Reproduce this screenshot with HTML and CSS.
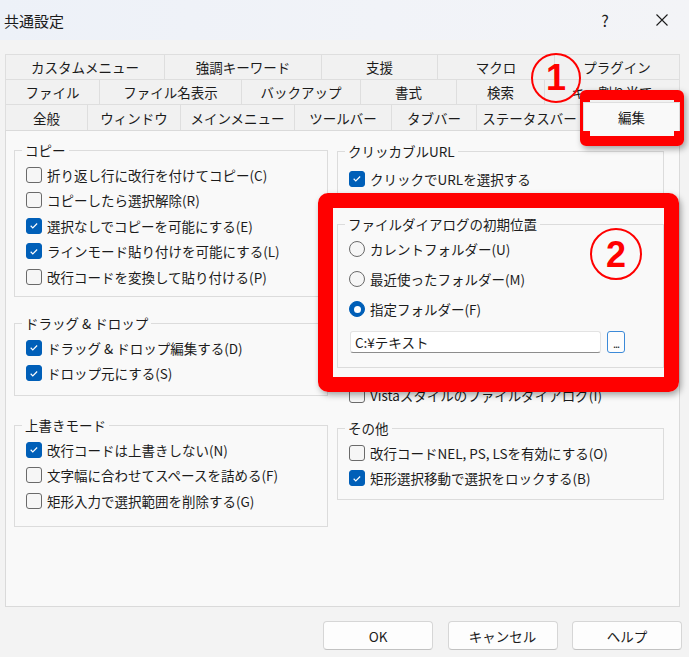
FILE: index.html
```html
<!DOCTYPE html>
<html lang="ja">
<head>
<meta charset="utf-8">
<title>共通設定</title>
<link rel="stylesheet" href="styles.css">
</head>
<body>
<div class="dialog">
  <div class="titlebar">
    <span class="title">共通設定</span>
    <span class="help">?</span>
    <span class="close"><svg viewBox="0 0 14 14" width="14" height="14"><path d="M1.5 1.5L12.5 12.5M12.5 1.5L1.5 12.5" stroke="#1b1b1b" stroke-width="1.1" fill="none"/></svg></span>
  </div>

  <div class="tabs">
    <div class="tabrow row1">
      <div class="tab">カスタムメニュー</div>
      <div class="tab">強調キーワード</div>
      <div class="tab">支援</div>
      <div class="tab">マクロ</div>
      <div class="tab">プラグイン</div>
    </div>
    <div class="tabrow row2">
      <div class="tab">ファイル</div>
      <div class="tab">ファイル名表示</div>
      <div class="tab">バックアップ</div>
      <div class="tab">書式</div>
      <div class="tab">検索</div>
      <div class="tab">キー割り当て</div>
    </div>
    <div class="tabrow row3">
      <div class="tab">全般</div>
      <div class="tab">ウィンドウ</div>
      <div class="tab">メインメニュー</div>
      <div class="tab">ツールバー</div>
      <div class="tab">タブバー</div>
      <div class="tab">ステータスバー</div>
      <div class="tab active">編集</div>
    </div>
  </div>

  <div class="panel">
    <div class="col col-left">
      <fieldset class="group g-copy">
        <legend>コピー</legend>
        <div class="item"><span class="cb"></span>折り返し行に改行を付けてコピー(C)</div>
        <div class="item"><span class="cb"></span>コピーしたら選択解除(R)</div>
        <div class="item"><span class="cb on"><svg viewBox="0 0 16 16"><path d="M4.2 8.3l2.4 2.4 5-5" stroke="#fff" stroke-width="1.3" fill="none"/></svg></span>選択なしでコピーを可能にする(E)</div>
        <div class="item"><span class="cb on"><svg viewBox="0 0 16 16"><path d="M4.2 8.3l2.4 2.4 5-5" stroke="#fff" stroke-width="1.3" fill="none"/></svg></span>ラインモード貼り付けを可能にする(L)</div>
        <div class="item"><span class="cb"></span>改行コードを変換して貼り付ける(P)</div>
      </fieldset>

      <fieldset class="group g-drag">
        <legend>ドラッグ &amp; ドロップ</legend>
        <div class="item"><span class="cb on"><svg viewBox="0 0 16 16"><path d="M4.2 8.3l2.4 2.4 5-5" stroke="#fff" stroke-width="1.3" fill="none"/></svg></span>ドラッグ &amp; ドロップ編集する(D)</div>
        <div class="item"><span class="cb on"><svg viewBox="0 0 16 16"><path d="M4.2 8.3l2.4 2.4 5-5" stroke="#fff" stroke-width="1.3" fill="none"/></svg></span>ドロップ元にする(S)</div>
      </fieldset>

      <fieldset class="group g-over">
        <legend>上書きモード</legend>
        <div class="item"><span class="cb on"><svg viewBox="0 0 16 16"><path d="M4.2 8.3l2.4 2.4 5-5" stroke="#fff" stroke-width="1.3" fill="none"/></svg></span>改行コードは上書きしない(N)</div>
        <div class="item"><span class="cb"></span>文字幅に合わせてスペースを詰める(F)</div>
        <div class="item"><span class="cb"></span>矩形入力で選択範囲を削除する(G)</div>
      </fieldset>
    </div>

    <div class="col col-right">
      <fieldset class="group g-url">
        <legend>クリッカブルURL</legend>
        <div class="item"><span class="cb on"><svg viewBox="0 0 16 16"><path d="M4.2 8.3l2.4 2.4 5-5" stroke="#fff" stroke-width="1.3" fill="none"/></svg></span>クリックでURLを選択する</div>
      </fieldset>

      <fieldset class="group g-dlg">
        <legend>ファイルダイアログの初期位置</legend>
        <div class="item tall"><span class="rb"></span>カレントフォルダー(U)</div>
        <div class="item tall"><span class="rb"></span>最近使ったフォルダー(M)</div>
        <div class="item tall"><span class="rb on"></span>指定フォルダー(F)</div>
        <div class="pathrow">
          <div class="pathbox">C:¥テキスト</div>
          <div class="browse">...</div>
        </div>
      </fieldset>

      <div class="item loose"><span class="cb"></span>Vistaスタイルのファイルダイアログ(I)</div>

      <fieldset class="group g-etc">
        <legend>その他</legend>
        <div class="item"><span class="cb"></span>改行コードNEL, PS, LSを有効にする(O)</div>
        <div class="item"><span class="cb on"><svg viewBox="0 0 16 16"><path d="M4.2 8.3l2.4 2.4 5-5" stroke="#fff" stroke-width="1.3" fill="none"/></svg></span>矩形選択移動で選択をロックする(B)</div>
      </fieldset>
    </div>
  </div>

  <div class="buttons">
    <div class="btn">OK</div>
    <div class="btn">キャンセル</div>
    <div class="btn">ヘルプ</div>
  </div>

  <div class="mark box1"></div>
  <div class="mark box2"></div>
  <svg class="num num1" viewBox="0 0 52 52" width="52" height="52">
    <circle cx="26" cy="26" r="24" stroke="#f00" stroke-width="2" fill="none"/>
    <text x="26" y="38" text-anchor="middle" class="numtext">1</text>
  </svg>
  <svg class="num num2" viewBox="0 0 54 54" width="54" height="54">
    <circle cx="27" cy="27" r="25" stroke="#f00" stroke-width="2" fill="none"/>
    <text x="27" y="39.5" text-anchor="middle" class="numtext">2</text>
  </svg>
</div>
</body>
</html>
```

FILE: styles.css
```css
* { box-sizing: border-box; }
html, body { margin: 0; padding: 0; }
body {
  width: 689px;
  height: 657px;
  overflow: hidden;
  background: #f3f3f3;
  font-family: "Noto Sans CJK JP", "Noto Sans", sans-serif;
  font-size: 13.5px;
  color: #1b1b1b;
}
.dialog { position: relative; width: 689px; height: 657px; }

/* title bar */
.titlebar {
  height: 40px;
  display: flex;
  align-items: center;
  padding-left: 4px;
  background: linear-gradient(90deg, #edf1f8 0%, #f1f3f8 55%, #f3f4f7 100%);
}
.title { flex: 1; font-size: 15px; }
.help { width: 16px; text-align: center; font-size: 16px; margin-right: 42px; }
.close { width: 14px; height: 14px; margin-right: 20px; display: flex; }

/* tabs */
.tabs { padding: 14px 0 0 5px; }
.tabrow { display: grid; height: 25px; }
.row1 { grid-template-columns: 160px 157px 116px 117px 125px; }
.row2 { grid-template-columns: 95px 142px 119px 96px 88px 135px; }
.row3 { grid-template-columns: 83px 93px 114px 97px 85px 106px 97px; height: 26px; }
.tab {
  display: flex;
  align-items: center;
  justify-content: center;
  white-space: nowrap;
  background: #f1f1f1;
  border-top: 1px solid #dedede;
  border-right: 1px solid #dedede;
}
.tab:first-child { border-left: 1px solid #dedede; }
.tab.active {
  position: relative;
  z-index: 1;
  background: #f9f9f9;
  margin-top: -2px;
  margin-bottom: -1px;
  border-left: 1px solid #dedede;
}

/* panel */
.panel {
  margin-left: 5px;
  width: 675px;
  height: 477px;
  border: 1px solid #dadada;
  background: #f9f9f9;
  display: flex;
  gap: 9px;
  padding: 11px 0 0 8px;
}
.col { display: flex; flex-direction: column; }
.col-left { width: 314px; }
.col-right { width: 327px; }

fieldset.group {
  margin: 0;
  padding: 4px 0 0 0;
  border: 1px solid #dcdcdc;
  min-width: 0;
}
fieldset.group legend {
  margin-left: 7px;
  padding: 0 3px;
  line-height: 16px;
}
.g-copy { height: 155px; }
.g-drag { height: 81px; margin-top: 18px !important; }
.g-over { height: 110px; margin-top: 21px !important; }
.g-url { height: 55px; margin-top: 1px !important; padding-top: 7px !important; }
.g-dlg { height: 152px; margin-top: 18px !important; padding-top: 2px !important; }
.g-etc { height: 80px; margin-top: 12.5px !important; }

.item {
  display: flex;
  align-items: center;
  gap: 5px;
  height: 25.5px;
  padding-left: 11px;
  white-space: nowrap;
}
.item.tall { height: 30px; }
.item.loose { height: 25px; margin-top: 14.5px; padding-left: 12px; }

.cb {
  flex: none;
  width: 16px;
  height: 16px;
  border: 1px solid #6a6a6a;
  border-radius: 3px;
  background: #f6f6f6;
  display: flex;
  align-items: center;
  justify-content: center;
}
.cb.on { background: #005fb8; border-color: #005fb8; }
.cb svg { width: 15px; height: 15px; }

.rb {
  flex: none;
  width: 16px;
  height: 16px;
  border: 1px solid #6a6a6a;
  border-radius: 50%;
  background: #f6f6f6;
  display: flex;
  align-items: center;
  justify-content: center;
}
.rb.on { background: #005fb8; border-color: #005fb8; }
.rb.on::after {
  content: "";
  width: 7px;
  height: 7px;
  border-radius: 50%;
  background: #fff;
}

.pathrow {
  display: flex;
  gap: 6px;
  margin-top: 7px;
  padding-left: 12px;
}
.pathbox {
  width: 251px;
  height: 22px;
  background: #fff;
  border: 1px solid #e3e3e3;
  border-bottom: 1px solid #8c8c8c;
  border-radius: 3px;
  padding-left: 4px;
  line-height: 20px;
}
.browse {
  width: 18px;
  height: 22px;
  border: 1px solid #3c8ad8;
  border-radius: 3px;
  background: #fdfdfd;
  font-size: 11px;
  line-height: 22px;
  text-align: center;
  letter-spacing: -1px;
}

/* buttons */
.buttons {
  display: flex;
  gap: 14.5px;
  padding-left: 323px;
  margin-top: 14px;
}
.btn {
  width: 110px;
  height: 29px;
  display: flex;
  align-items: center;
  justify-content: center;
  background: #fdfdfd;
  border: 1px solid #d6d6d6;
  border-bottom-color: #c2c2c2;
  border-radius: 4px;
}

/* annotations */
.mark {
  position: absolute;
  border-style: solid;
  border-color: #ff0000;
  box-shadow: 2px 3px 6px rgba(0, 0, 0, 0.35);
}
.box1 { left: 580px; top: 90px; width: 104px; height: 56px; border-width: 10px; border-radius: 6px; }
.box2 { left: 318px; top: 193px; width: 361px; height: 199px; border-width: 15px; border-radius: 10px; }
.num { position: absolute; }
.num1 { left: 530px; top: 52px; }
.num2 { left: 589px; top: 227px; }
.numtext {
  font-family: "Liberation Sans", "Noto Sans", sans-serif;
  font-weight: bold;
  font-size: 36px;
  fill: #f00;
}
```
